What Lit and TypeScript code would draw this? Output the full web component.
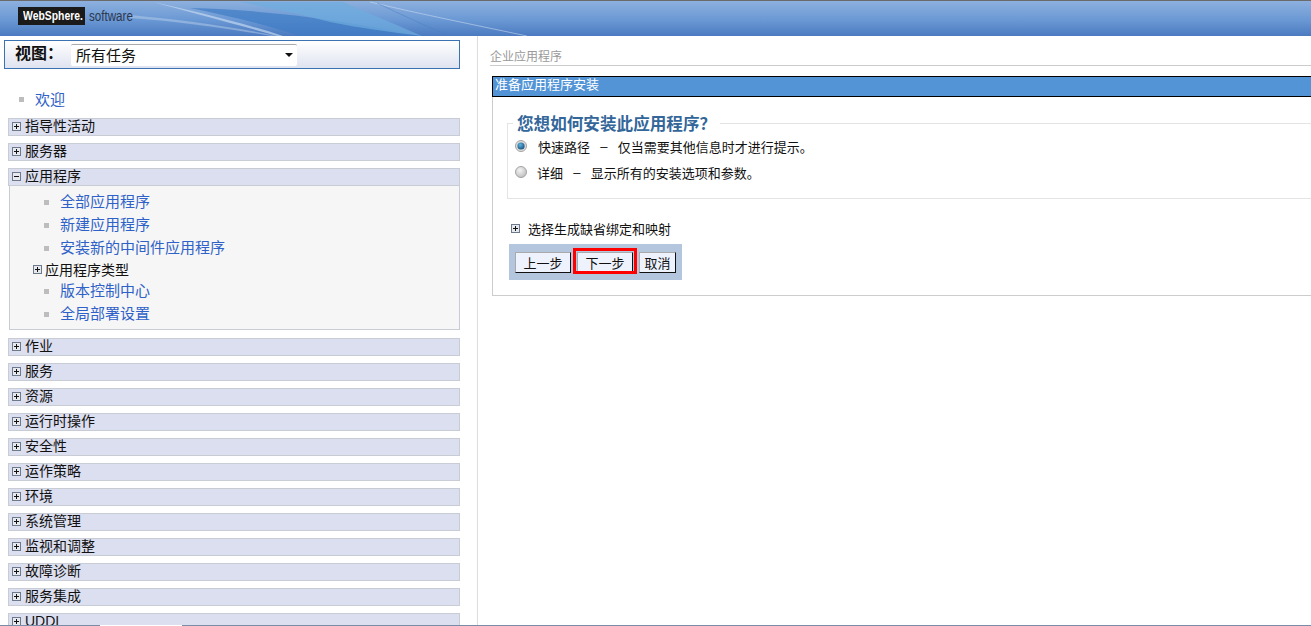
import { LitElement, html, svg, css, nothing } from "lit";
import { customElement } from "lit/decorators.js";

const before = ["指导性活动", "服务器"];
const after = ["作业", "服务", "资源", "运行时操作", "安全性", "运作策略", "环境", "系统管理", "监视和调整", "故障诊断", "服务集成", "UDDI"];

const box = (minus = false) => html`<svg class="tg" width="9" height="9" viewBox="0 0 9 9"><rect x=".5" y=".5" width="8" height="8" fill="#e6e9ee" stroke="#6d7a8c"/><path d="M2 4.5h5${minus ? "" : "M4.5 2v5"}" stroke="#111" fill="none"/></svg>`;

@customElement("app-root")
export class AppRoot extends LitElement {
  static styles = css`
    :host { display: block; width: 1311px; height: 626px; overflow: hidden; position: relative; background: #fff; font-family: "Liberation Sans", "Noto Sans CJK SC", sans-serif; }
    .banner { height: 36px; box-sizing: border-box; border-top: 1px solid #6b6b6b; background: linear-gradient(#8db0de, #6a98d4 55%, #4b7ac0); position: relative; overflow: hidden; }
    .swoosh { position: absolute; left: 0; top: -1px; }
    .logo { position: absolute; left: 18px; top: 6px; display: flex; align-items: center; gap: 4px; }
    .ws { background: #1a1a1a; width: 67px; height: 18px; }
    .ws span { display: block; width: 62px; color: #fff; font: bold 13px/18px "Liberation Sans", sans-serif; margin-left: 5px; white-space: nowrap; transform: scaleX(.8); transform-origin: left; }
    .sw { color: #2c3850; font: 14px/18px "Liberation Sans", sans-serif; transform: scaleX(.83); transform-origin: left; }
    .main { display: flex; height: 590px; }
    .left { flex: none; border-right: 1px solid #ddd; padding: 4px 0 0 4px; box-sizing: border-box; width: 478px; }
    .view { width: 456px; height: 29px; box-sizing: border-box; border: 1px solid #3b72b2; background: linear-gradient(#fff, #dfe3f0); display: flex; align-items: center; padding-left: 10px; }
    .view b { font-size: 16px; color: #111; width: 56px; margin-top: -6px; }
    .sel { width: 226px; height: 22px; box-sizing: border-box; background: #fff; border-top: 1px solid #aaa; border-radius: 2px; display: flex; align-items: center; justify-content: space-between; padding: 0 4px 2px 5px; font-size: 15px; color: #111; }
    .caret { width: 0; height: 0; border: 4px solid transparent; border-top: 4px solid #111; border-bottom: 0; margin-top: 2px; }
    .welcome { display: flex; align-items: center; margin: 19px 0 10px 15px; height: 20px; font-size: 15px; }
    .bullet { width: 5px; height: 5px; background: #bdbdbd; flex: none; margin-top: 3px; }
    .welcome a { margin-left: 11px; }
    a { color: #2f62c8; text-decoration: none; }
    .rows { margin-left: 4px; width: 452px; display: flex; flex-direction: column; gap: 7px; }
    .row { height: 18px; box-sizing: border-box; border: 1px solid #c8ccd4; background: #dcdfef; display: flex; align-items: center; padding: 0 0 3px 3px; font-size: 14px; line-height: 16px; color: #111; }
    .tg { flex: none; margin-right: 4px; }
    .row .tg { margin-top: 2px; }
    .sec { display: flex; flex-direction: column; margin-bottom: 1px; }
    .body { height: 144px; box-sizing: border-box; border: 1px solid #c8ccd4; border-top: 0; background: #f6f6f6; padding: 3px 0 0 34px; margin-left: 1px; font-size: 15px; }
    .it { display: flex; align-items: center; height: 23px; }
    .it a { margin-left: 11px; }
    .sub { display: flex; align-items: center; height: 18px; margin: 2px 0 0 -11px; color: #111; font-size: 14px; }
    .sub .tg { margin-right: 3px; }
    .right { flex: 1; padding: 12px 0 0 12px; min-width: 0; }
    .crumb { font-size: 12px; line-height: 19px; color: #999; height: 17px; border-bottom: 1px solid #ccc; }
    .panel { margin: 10px 0 0 2px; border-left: 1px solid #ccc; border-bottom: 1px solid #ccc; height: 220px; box-sizing: border-box; }
    .title { height: 21px; box-sizing: border-box; background: #5294d6; border: 1px solid #000; border-right: 0; color: #fff; font-size: 13px; line-height: 15px; padding-left: 2px; margin-left: -1px; }
    .fs { margin: 26px 0 0 14px; border: 1px solid #e4e4e4; border-right: 0; height: 76px; box-sizing: border-box; position: relative; padding: 12px 0 0 7px; }
    .legend { position: absolute; left: 5px; top: -9px; background: #fff; padding: 0 4px 0 4px; font-size: 16.6px; line-height: 20px; font-weight: bold; color: #336699; white-space: nowrap; }
    .opt { display: flex; align-items: center; height: 20px; font-size: 13px; color: #111; white-space: pre; margin-bottom: 6px; }
    .d { margin: 0 10.3px; }
    .radio { margin-right: 11px; flex: none; }
    .opt2 .radio { margin-right: 10px; }
    .adv { display: flex; align-items: center; margin: 20px 0 0 18px; height: 18px; font-size: 13px; color: #111; }
    .adv .tg { margin-right: 8px; }
    .bar { margin: 7px 0 0 16px; width: 173px; height: 36px; box-sizing: border-box; background: #b4c5de; display: flex; align-items: flex-start; padding: 8px 0 0 6px; gap: 6px; }
    .btn { height: 21px; box-sizing: border-box; background: #edf2fd; border: 1px solid; border-color: #aaa #111 #111 #aaa; font-size: 13px; color: #111; display: flex; align-items: center; justify-content: center; position: relative; }
    .b1, .b2 { width: 56px; }
    .b2::after { content: ""; position: absolute; left: -5px; right: -5px; top: -5px; bottom: -2px; border: 3px solid #f00; }
    .b3 { width: 37px; }
    .foot { position: absolute; left: 0; right: 0; bottom: 0; height: 1px; background: linear-gradient(to right, #7a8ca6 100px, #fff 100px, #fff 182px, #7a8ca6 182px); }
  `;

  radio(on: boolean) {
    return html`<svg class="radio" width="12" height="12" viewBox="0 0 12 12">
      <defs>
        <radialGradient id="rg-off" cx=".4" cy=".35" r=".8"><stop offset="0" stop-color="#f4f4f4"/><stop offset="1" stop-color="#b4b4b4"/></radialGradient>
        <radialGradient id="rg-on" cx=".4" cy=".35" r=".8"><stop offset="0" stop-color="#5fb4e0"/><stop offset="1" stop-color="#0d3f6e"/></radialGradient>
      </defs>
      <circle cx="6" cy="6" r="5.5" fill="${on ? "#dcdcdc" : "url(#rg-off)"}" stroke="#a4a4a4"/>
      ${on ? svg`<circle cx="6" cy="6" r="3.6" fill="url(#rg-on)"/>` : nothing}
    </svg>`;
  }

  render() {
    return html`
      <div class="banner">
        <svg class="swoosh" width="640" height="36" viewBox="0 0 640 36" fill="none">
          <path d="M190 8C270 10 340 20 422 36H300C270 26 230 16 190 8Z" fill="#3f7cc4" opacity=".7"/>
          <path d="M240 2H343C370 14 400 26 422 36C390 32 360 28 330 22C300 14 270 8 240 2Z" fill="#6eadde" opacity=".7"/>
          <path d="M153 2C190 10 240 22 283 36H277C235 24 190 12 153 2Z" fill="#c9dcf2" opacity=".65"/>
          <path d="M130 15C175 19 230 26 277 36H271C225 28 175 21 130 18Z" fill="#b5cdea" opacity=".5"/>
          <path d="M370 2C420 14 480 26 527 36" stroke="#c6d9f0" opacity=".6"/>
          <path d="M377 3C400 14 430 28 450 36" stroke="#4d7fc2" opacity=".5"/>
        </svg>
        <div class="logo"><div class="ws"><span>WebSphere.</span></div><span class="sw">software</span></div>
      </div>
      <div class="main">
        <div class="left">
          <div class="view"><b>视图：</b><div class="sel"><span>所有任务</span><i class="caret"></i></div></div>
          <div class="welcome"><i class="bullet"></i><a>欢迎</a></div>
          <div class="rows">
            ${before.map((t) => html`<div class="row">${box()}${t}</div>`)}
            <div class="sec">
              <div class="row">${box(true)}应用程序</div>
              <div class="body">
                <div class="it"><i class="bullet"></i><a>全部应用程序</a></div>
                <div class="it"><i class="bullet"></i><a>新建应用程序</a></div>
                <div class="it"><i class="bullet"></i><a>安装新的中间件应用程序</a></div>
                <div class="sub">${box()}应用程序类型</div>
                <div class="it"><i class="bullet"></i><a>版本控制中心</a></div>
                <div class="it"><i class="bullet"></i><a>全局部署设置</a></div>
              </div>
            </div>
            ${after.map((t) => html`<div class="row">${box()}${t}</div>`)}
          </div>
        </div>
        <div class="right">
          <div class="crumb">企业应用程序</div>
          <div class="panel">
            <div class="title">准备应用程序安装</div>
            <div class="fs">
              <div class="legend">您想如何安装此应用程序？</div>
              <div class="opt">${this.radio(true)}快速路径<span class="d">–</span>仅当需要其他信息时才进行提示。</div>
              <div class="opt opt2">${this.radio(false)}详细<span class="d">–</span>显示所有的安装选项和参数。</div>
            </div>
            <div class="adv">${box()}选择生成缺省绑定和映射</div>
            <div class="bar">
              <div class="btn b1">上一步</div>
              <div class="btn b2">下一步</div>
              <div class="btn b3">取消</div>
            </div>
          </div>
        </div>
      </div>
      <div class="foot"></div>
    `;
  }
}
